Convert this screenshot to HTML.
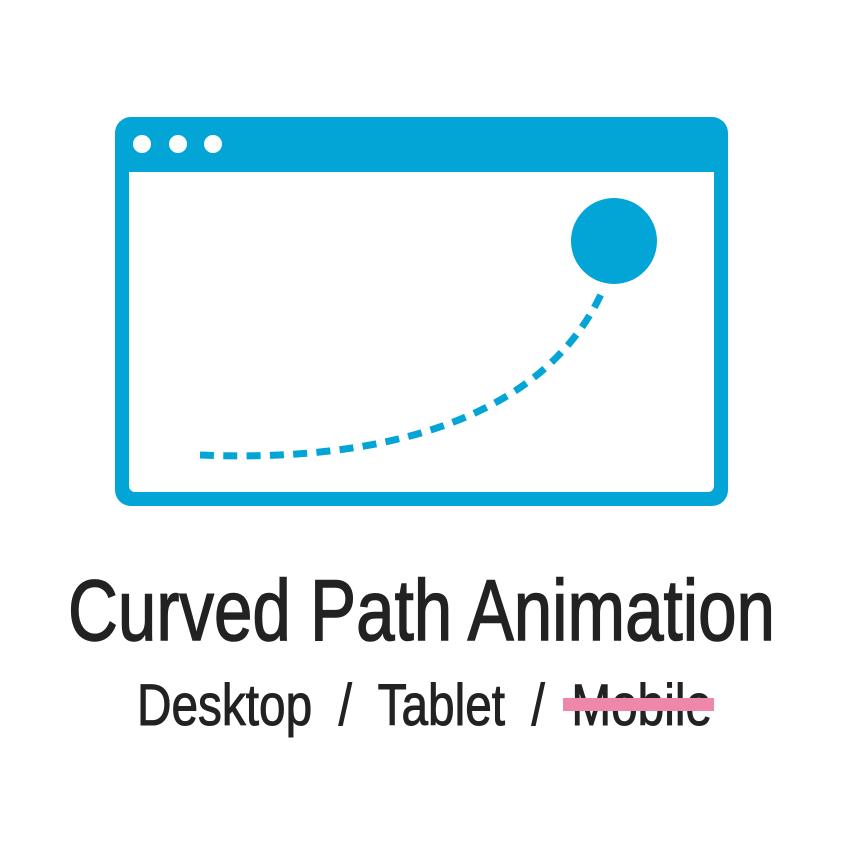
<!DOCTYPE html>
<html><head><meta charset="utf-8"><style>html,body{margin:0;padding:0;background:#fff}svg{display:block}</style></head>
<body>
<svg width="843" height="843" viewBox="0 0 843 843" xmlns="http://www.w3.org/2000/svg">
<rect width="843" height="843" fill="#fff"/>
<rect x="115" y="117" width="613" height="389" rx="16" fill="#02A5D5"/>
<path d="M129 172 H714 V486 a6 6 0 0 1 -6 6 H135 a6 6 0 0 1 -6 -6 Z" fill="#fff"/>
<circle cx="142" cy="144" r="9" fill="#fff"/>
<circle cx="178" cy="144" r="9" fill="#fff"/>
<circle cx="213" cy="144" r="9" fill="#fff"/>
<circle cx="614" cy="241" r="43" fill="#02A5D5"/>
<path d="M200 455 C 360 462 540 430 603 290" fill="none" stroke="#02A5D5" stroke-width="7" stroke-dasharray="14 9.3"/>
<text x="68" y="640" textLength="707" lengthAdjust="spacingAndGlyphs" font-family="'Liberation Sans Narrow','Liberation Sans',sans-serif" font-size="86" fill="#222" stroke="#222" stroke-width="1.5">Curved Path Animation</text>
<text x="137" y="725" textLength="575" lengthAdjust="spacingAndGlyphs" font-family="'Liberation Sans Narrow','Liberation Sans',sans-serif" font-size="58" fill="#222" stroke="#222" stroke-width="1" xml:space="preserve">Desktop  /  Tablet  /  Mobile</text>
<rect x="563" y="698" width="151" height="13" fill="#EE87AA"/>
</svg>
</body></html>
